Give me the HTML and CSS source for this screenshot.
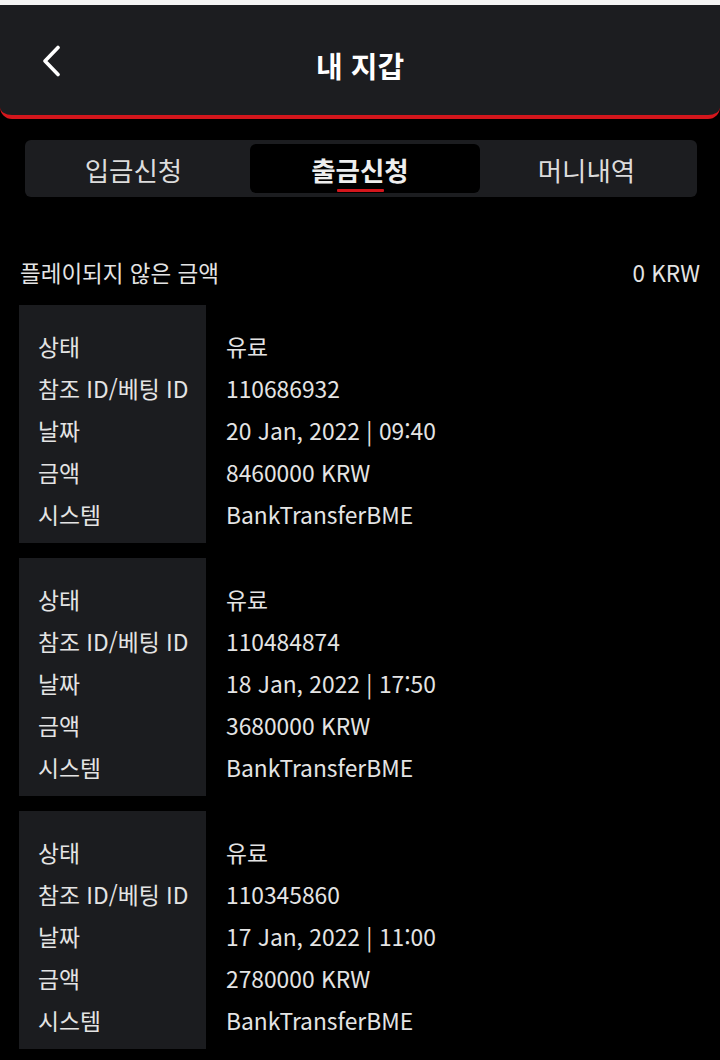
FILE: index.html
```html
<!DOCTYPE html>
<html lang="ko">
<head>
<meta charset="utf-8">
<title>내 지갑</title>
<link rel="stylesheet" href="styles.css">
</head>
<body>
<div class="statusbar"></div>
<header class="header">
  <div class="back">
    <svg width="22" height="32" viewBox="0 0 22 32"><polyline points="17,2.5 4,16 17,29.5" fill="none" stroke="#ffffff" stroke-width="3.6" stroke-linecap="round" stroke-linejoin="round"/></svg>
  </div>
  <h1 class="title">내 지갑</h1>
  <div></div>
</header>
<nav class="tabs">
  <div class="tab first">입금신청</div>
  <div class="tab active"><span>출금신청</span><i class="bar"></i></div>
  <div class="tab">머니내역</div>
</nav>
<div class="summary">
  <span>플레이되지 않은 금액</span>
  <span>0 KRW</span>
</div>
<section class="card">
  <div class="labels"><div>상태</div><div>참조 ID/베팅 ID</div><div>날짜</div><div>금액</div><div>시스템</div></div>
  <div class="values"><div>유료</div><div>110686932</div><div>20 Jan, 2022 | 09:40</div><div>8460000 KRW</div><div>BankTransferBME</div></div>
</section>
<section class="card">
  <div class="labels"><div>상태</div><div>참조 ID/베팅 ID</div><div>날짜</div><div>금액</div><div>시스템</div></div>
  <div class="values"><div>유료</div><div>110484874</div><div>18 Jan, 2022 | 17:50</div><div>3680000 KRW</div><div>BankTransferBME</div></div>
</section>
<section class="card">
  <div class="labels"><div>상태</div><div>참조 ID/베팅 ID</div><div>날짜</div><div>금액</div><div>시스템</div></div>
  <div class="values"><div>유료</div><div>110345860</div><div>17 Jan, 2022 | 11:00</div><div>2780000 KRW</div><div>BankTransferBME</div></div>
</section>
</body>
</html>
```
FILE: styles.css
```css
* { box-sizing: border-box; }
html, body { margin: 0; padding: 0; }
body {
  background: #000;
  color: #e4e4e4;
  font-family: "Noto Sans CJK KR", "Noto Sans", sans-serif;
  width: 720px;
  height: 1060px;
  overflow: hidden;
}
.statusbar { height: 5px; background: #f4f4f4; }
.header {
  height: 114px;
  background: #1c1d20;
  border-bottom: 4px solid #d4161c;
  border-radius: 0 0 12px 12px;
  display: grid;
  grid-template-columns: 1fr auto 1fr;
  align-items: center;
}
.back { padding-left: 41px; padding-top: 1px; display: flex; align-items: center; }
.back svg { display: block; }
.title {
  margin: 0;
  font-size: 29px;
  font-weight: 700;
  color: #fff;
  line-height: 40px;
  padding-top: 10px;
}
.tabs {
  margin: 21px 23px 0 25px;
  height: 57px;
  background: #1c1d20;
  border-radius: 6px;
  padding: 4px;
  display: grid;
  grid-template-columns: 221px 230px 1fr;
}
.tab {
  display: flex;
  flex-direction: column;
  align-items: center;
  padding-top: 9px;
  font-size: 26.5px;
  line-height: 34px;
  color: #dcdcdc;
}
.tab.first { padding-right: 12px; }
.tab.active {
  background: #000;
  border-radius: 6px;
  font-weight: 700;
  color: #eee;
  padding-right: 10px;
}
.tab .bar {
  display: block;
  width: 47px;
  height: 3px;
  margin-top: 2px;
  background: #d4161c;
  border-radius: 1px;
}
.summary {
  display: flex;
  justify-content: space-between;
  padding: 0 20px;
  margin-top: 60px;
  font-size: 22.5px;
  line-height: 30px;
}
.card {
  display: flex;
  margin: 18px 0 0 19px;
  font-size: 22.8px;
  line-height: 42px;
}
.card + .card { margin-top: 15px; }
.labels {
  width: 187px;
  background: #1b1c1f;
  padding: 21px 0 7px 19px;
}
.values {
  padding: 21px 0 7px 20px;
}
```
